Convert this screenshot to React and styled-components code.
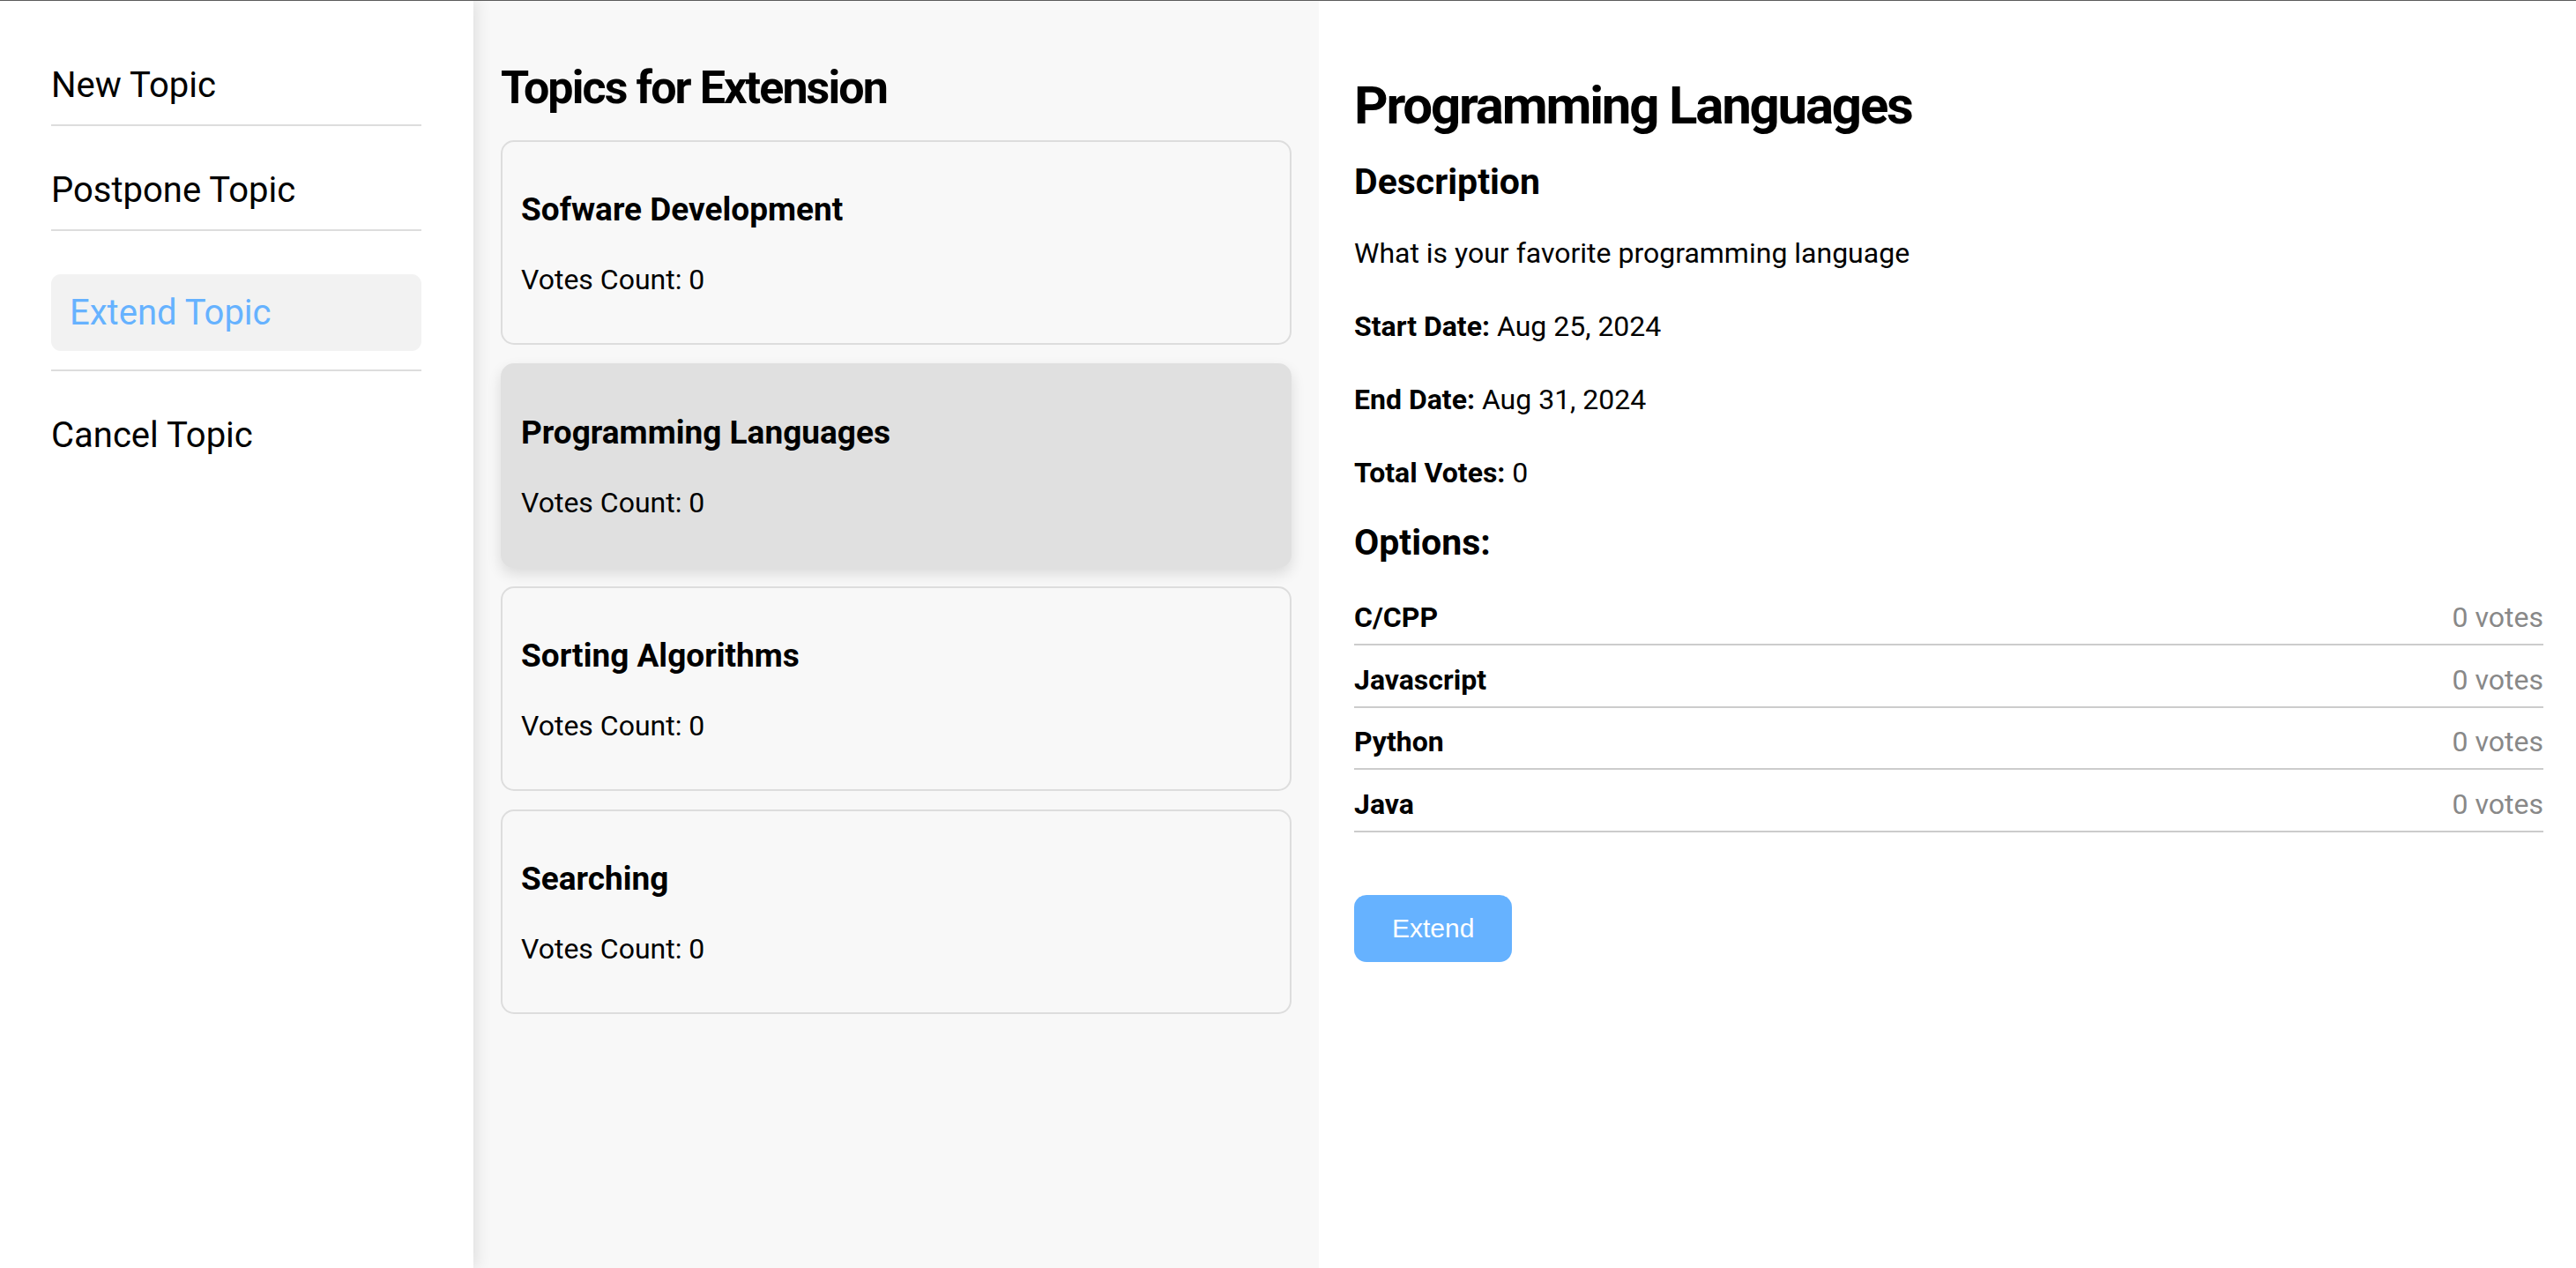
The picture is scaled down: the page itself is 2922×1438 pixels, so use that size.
import React, { useState } from 'react';
import styled, { createGlobalStyle } from 'styled-components';

const menu = ['New Topic', 'Postpone Topic', 'Extend Topic', 'Cancel Topic'];

const topics = [
	{ id: 1, name: 'Sofware Development', votes: 0 },
	{ id: 2, name: 'Programming Languages', votes: 0 },
	{ id: 3, name: 'Sorting Algorithms', votes: 0 },
	{ id: 4, name: 'Searching', votes: 0 },
];

const options = [
	{ name: 'C/CPP', votes: 0 },
	{ name: 'Javascript', votes: 0 },
	{ name: 'Python', votes: 0 },
	{ name: 'Java', votes: 0 },
];

function App() {
	const [active, setActive] = useState('Extend Topic');
	const [selected, setSelected] = useState(2);

	const topic = topics.find(t => t.id === selected);

	return (
		<>
			<GlobalStyle />
			<Layout>
				<Sidebar>
					<Menu>
						{menu.map(item => (
							<MenuItem key={item}>
								<MenuLink
									$active={item === active}
									onClick={() => setActive(item)}
								>
									{item}
								</MenuLink>
							</MenuItem>
						))}
					</Menu>
				</Sidebar>

				<TopicsPanel>
					<PanelTitle>Topics for Extension</PanelTitle>
					<TopicList>
						{topics.map(t => (
							<TopicCard
								key={t.id}
								$selected={t.id === selected}
								onClick={() => setSelected(t.id)}
							>
								<TopicName>{t.name}</TopicName>
								<VotesCount>Votes Count: {t.votes}</VotesCount>
							</TopicCard>
						))}
					</TopicList>
				</TopicsPanel>

				<Details>
					<DetailTitle>{topic.name}</DetailTitle>
					<SectionTitle $gap='38px'>Description</SectionTitle>
					<InfoList>
						<InfoText>What is your favorite programming language</InfoText>
						<InfoText>
							<strong>Start Date:</strong> Aug 25, 2024
						</InfoText>
						<InfoText>
							<strong>End Date:</strong> Aug 31, 2024
						</InfoText>
						<InfoText>
							<strong>Total Votes:</strong> 0
						</InfoText>
					</InfoList>
					<SectionTitle $gap='33px'>Options:</SectionTitle>
					<OptionList>
						{options.map(o => (
							<OptionRow key={o.name}>
								<OptionName>{o.name}</OptionName>
								<OptionVotes>{o.votes} votes</OptionVotes>
							</OptionRow>
						))}
					</OptionList>
					<ExtendButton>Extend</ExtendButton>
				</Details>
			</Layout>
		</>
	);
}

const GlobalStyle = createGlobalStyle`
	html, body {
		margin: 0;
		padding: 0;
		height: 100%;
	}
	body {
		font-family: Roboto, 'Noto Sans', sans-serif;
		color: #000;
		background: #fff;
	}
	#root {
		height: 100%;
	}
`;

const Layout = styled.div`
	display: flex;
	height: 100vh;
	box-sizing: border-box;
	border-top: 1px solid #5c5c5c;
	overflow: hidden;
`;

const Sidebar = styled.nav`
	position: relative;
	z-index: 2;
	flex: 0 0 537px;
	box-sizing: border-box;
	padding: 51px 59px 0 58px;
	background: #fff;
	box-shadow: 4px 0 16px rgba(0, 0, 0, 0.1);
`;

const Menu = styled.ul`
	list-style: none;
	margin: 0;
	padding: 0;
`;

const MenuItem = styled.li`
	padding: 21px 0;
	margin-bottom: 28px;
	border-bottom: 2px solid #dddddd;
	&:last-child {
		border-bottom: none;
	}
`;

const MenuLink = styled.a`
	display: block;
	font-size: 40px;
	line-height: normal;
	padding: ${p => (p.$active ? '20px 21px' : '0')};
	border-radius: 11px;
	color: ${p => (p.$active ? '#66b2ff' : '#000')};
	background: ${p => (p.$active ? '#f2f2f2' : 'transparent')};
	text-decoration: none;
	cursor: pointer;
`;

const TopicsPanel = styled.section`
	position: relative;
	z-index: 1;
	flex: 0 0 959px;
	box-sizing: border-box;
	padding: 68px 31px 0;
	background: #f8f8f8;
`;

const PanelTitle = styled.h2`
	margin: 0 0 29px;
	font-size: 52px;
	font-weight: 700;
	line-height: normal;
	letter-spacing: -0.037em;
`;

const TopicList = styled.div`
	display: flex;
	flex-direction: column;
	gap: 21px;
`;

const TopicCard = styled.div`
	padding: 55px 22px 53px 21px;
	border: 2px solid ${p => (p.$selected ? '#e0e0e0' : '#dddddd')};
	border-radius: 15px;
	background: ${p => (p.$selected ? '#e0e0e0' : 'transparent')};
	box-shadow: ${p => (p.$selected ? '0 7px 16px rgba(0, 0, 0, 0.12)' : 'none')};
	cursor: pointer;
`;

const TopicName = styled.h3`
	margin: 0 0 39px;
	font-size: 37px;
	font-weight: 700;
	line-height: normal;
`;

const VotesCount = styled.p`
	margin: 0;
	font-size: 32px;
	line-height: normal;
`;

const Details = styled.section`
	flex: 1;
	display: flex;
	flex-direction: column;
	padding: 83px 37px 0 40px;
	background: #fff;
	box-shadow: -2px 0 6px rgba(0, 0, 0, 0.04);
`;

const DetailTitle = styled.h1`
	margin: 0 0 27px;
	font-size: 60px;
	font-weight: 700;
	line-height: normal;
	letter-spacing: -0.037em;
`;

const SectionTitle = styled.h3`
	margin: 0 0 ${p => p.$gap || '40px'};
	font-size: 41px;
	font-weight: 700;
	line-height: normal;
`;

const InfoList = styled.div`
	display: flex;
	flex-direction: column;
	gap: 45px;
	margin-bottom: 36px;
`;

const InfoText = styled.p`
	margin: 0;
	font-size: 32px;
	line-height: normal;
	strong {
		font-weight: 700;
	}
`;

const OptionList = styled.ul`
	list-style: none;
	margin: 0;
	padding: 0;
`;

const OptionRow = styled.li`
	display: flex;
	justify-content: space-between;
	align-items: baseline;
	padding: 9px 0 11px;
	margin-bottom: 10.5px;
	border-bottom: 2px solid #cccccc;
	font-size: 32px;
	line-height: normal;
`;

const OptionName = styled.span`
	font-weight: 700;
`;

const OptionVotes = styled.span`
	color: #888888;
`;

const ExtendButton = styled.button`
	align-self: flex-start;
	margin-top: 61px;
	padding: 21px 43px;
	border: none;
	border-radius: 14px;
	background: #66b2ff;
	color: #fff;
	font-family: 'Liberation Sans', Arial, sans-serif;
	font-size: 30px;
	cursor: pointer;
`;

export default App;
